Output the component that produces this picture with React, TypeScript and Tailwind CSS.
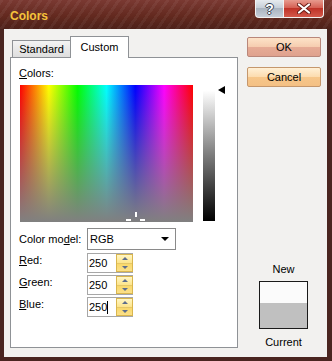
import React from "react";

function Spinner() {
  return (
    <div className="w-[17px] h-full flex flex-col border border-[#d9b64e] bg-[linear-gradient(to_bottom,#fff6c4,#fde48a_50%,#f9d766_50%,#fbe08a)]">
      <div className="flex-1 flex items-center justify-center border-b border-[#e6c868]">
        <div className="w-0 h-0 border-x-[3px] border-x-transparent border-b-[3px] border-b-[#5d6d8c]" />
      </div>
      <div className="flex-1 flex items-center justify-center">
        <div className="w-0 h-0 border-x-[3px] border-x-transparent border-t-[3px] border-t-[#5d6d8c]" />
      </div>
    </div>
  );
}

function NumBox({ caret }: { caret?: boolean }) {
  return (
    <div className="w-[46px] h-[20px] flex border border-[#a7a7a7] border-r-0 bg-white">
      <div className="flex-1 flex items-center pl-[1px] leading-[13px] text-[11px]">
        <span>250</span>
        {caret && <span className="inline-block w-px h-[13px] bg-black" />}
      </div>
      <Spinner />
    </div>
  );
}

function Row({ u, rest, caret }: { u: string; rest: string; caret?: boolean }) {
  return (
    <div className="flex items-start h-[20px]">
      <div className="w-[68px] shrink-0 -ml-px mt-[1px] leading-[13px]">
        <span className="underline">{u}</span>
        {rest}
      </div>
      <NumBox caret={caret} />
    </div>
  );
}

export default function App() {
  return (
    <div className="w-[332px] h-[361px] flex flex-col bg-[#4a2520] font-['Liberation_Sans',Arial,sans-serif] text-[11px] leading-[13px] text-black overflow-hidden">
      {/* Title bar */}
      <div className="h-[29px] shrink-0 flex items-start bg-[repeating-linear-gradient(125deg,rgba(255,255,255,0.05)_0px,rgba(255,255,255,0.05)_3px,transparent_3px,transparent_8px),linear-gradient(to_bottom,#7a3932,#63291f_55%,#4d2119)]">
        <div className="pl-[10px] pt-[9px] text-[12px] leading-[14px] font-bold text-[#f5c33b]">Colors</div>
        <div className="flex-1" />
        <div className="flex mr-[8px] h-[18px]">
          <div className="w-[28px] h-full flex items-center justify-center rounded-bl-[4px] border border-t-0 border-r-0 border-[#f2f2f2] bg-[linear-gradient(to_bottom,#e6eaee,#c4ccd6_50%,#aab4c0_50%,#c6ced8)] text-white font-bold text-[14px] leading-none [text-shadow:1px_0_0_#3a4552,-1px_0_0_#3a4552,0_1px_0_#3a4552,0_-1px_0_#3a4552]">
            ?
          </div>
          <div className="w-[41px] h-full flex items-center justify-center rounded-br-[4px] border border-t-0 border-[#f2f2f2] bg-[linear-gradient(to_bottom,#e79a8e,#d35a4e_50%,#bf3328_50%,#d4584a)]">
            <svg width="14" height="11" viewBox="0 0 14 11">
              <path d="M2 1.5 L12 9.5 M12 1.5 L2 9.5" stroke="#6b1d16" strokeWidth="4" strokeLinecap="round" />
              <path d="M2 1.5 L12 9.5 M12 1.5 L2 9.5" stroke="#ffffff" strokeWidth="2.2" strokeLinecap="round" />
            </svg>
          </div>
        </div>
      </div>

      {/* Client */}
      <div className="flex-1 flex ml-[4px] mr-[5px] mb-[4px] bg-[#f2f1ef]">
        {/* Left column */}
        <div className="w-[234px] shrink-0 pl-[6px] flex flex-col">
          <div className="h-[28px] pt-[7px] flex items-end shrink-0">
            <div className="ml-[2px] w-[58px] h-[17px] border border-r-0 border-b-0 border-[#8f9296] bg-[linear-gradient(to_bottom,#f3f3f3,#dedede)] flex items-center justify-center">
              Standard
            </div>
            <div className="relative z-10 -mb-px w-[59px] h-[22px] border border-b-0 border-[#8f9296] bg-white flex items-center justify-center">
              Custom
            </div>
          </div>
          <div className="w-[228px] h-[291px] border border-[#8f9296] bg-white pl-[9px] pt-[9px] flex flex-col">
            <div className="-ml-px">
              <span className="underline">C</span>olors:
            </div>
            <div className="mt-[5px] flex items-start">
              <div className="relative w-[173px] h-[137px] bg-[linear-gradient(to_bottom,rgba(128,128,128,0),#808080),linear-gradient(to_right,#ff0000,#ffff00,#00ff00,#00ffff,#0000ff,#ff00ff,#ff0000)]">
                <div className="absolute left-[115px] top-[127px] w-[2px] h-[5px] bg-white" />
                <div className="absolute left-[106px] top-[134px] w-[5px] h-[2px] bg-white" />
                <div className="absolute left-[120px] top-[134px] w-[5px] h-[2px] bg-white" />
              </div>
              <div className="ml-[10px] w-[12px] h-[136px] bg-[linear-gradient(to_bottom,#ffffff,#ffffff_4%,#808080_50%,#000000)]" />
              <div className="ml-[3px] mt-[1px] w-0 h-0 border-y-[4px] border-y-transparent border-r-[7px] border-r-black" />
            </div>
            <div className="mt-[6px] flex items-center h-[22px]">
              <div className="w-[68px] shrink-0 -ml-px">
                Color mo<span className="underline">d</span>el:
              </div>
              <div className="w-[89px] h-[22px] border border-[#8a8a8a] bg-white flex items-center pl-[2px] pr-[6px]">
                <span className="flex-1">RGB</span>
                <div className="w-0 h-0 border-x-[4px] border-x-transparent border-t-[4px] border-t-black" />
              </div>
            </div>
            <div className="mt-[3px] flex flex-col gap-[2px]">
              <Row u="R" rest="ed:" />
              <Row u="G" rest="reen:" />
              <Row u="B" rest="lue:" caret />
            </div>
          </div>
        </div>

        {/* Right column */}
        <div className="flex-1 flex flex-col pl-[9px] pr-[6px]">
          <div className="mt-[8px] h-[20px] rounded-[2px] border border-[#b9877a] bg-[linear-gradient(to_bottom,#fde3c8,#f6cdb0_48%,#e6ab95_52%,#dfa28e)] flex items-center justify-center">
            OK
          </div>
          <div className="mt-[10px] h-[20px] rounded-[2px] border border-[#c5976c] bg-[linear-gradient(to_bottom,#fff0d6,#fcdcb0_48%,#f6c68a_52%,#f4c084)] flex items-center justify-center">
            Cancel
          </div>
          <div className="flex-1" />
          <div className="flex flex-col items-center pb-[8px] pr-[1px]">
            <div className="mb-[5px]">New</div>
            <div className="w-[49px] h-[48px] border border-[#1a1a1a] flex flex-col">
              <div className="h-[21px] bg-[#fbfbfb]" />
              <div className="flex-1 bg-[#c0c0c0]" />
            </div>
            <div className="mt-[7px]">Current</div>
          </div>
        </div>
      </div>
    </div>
  );
}
